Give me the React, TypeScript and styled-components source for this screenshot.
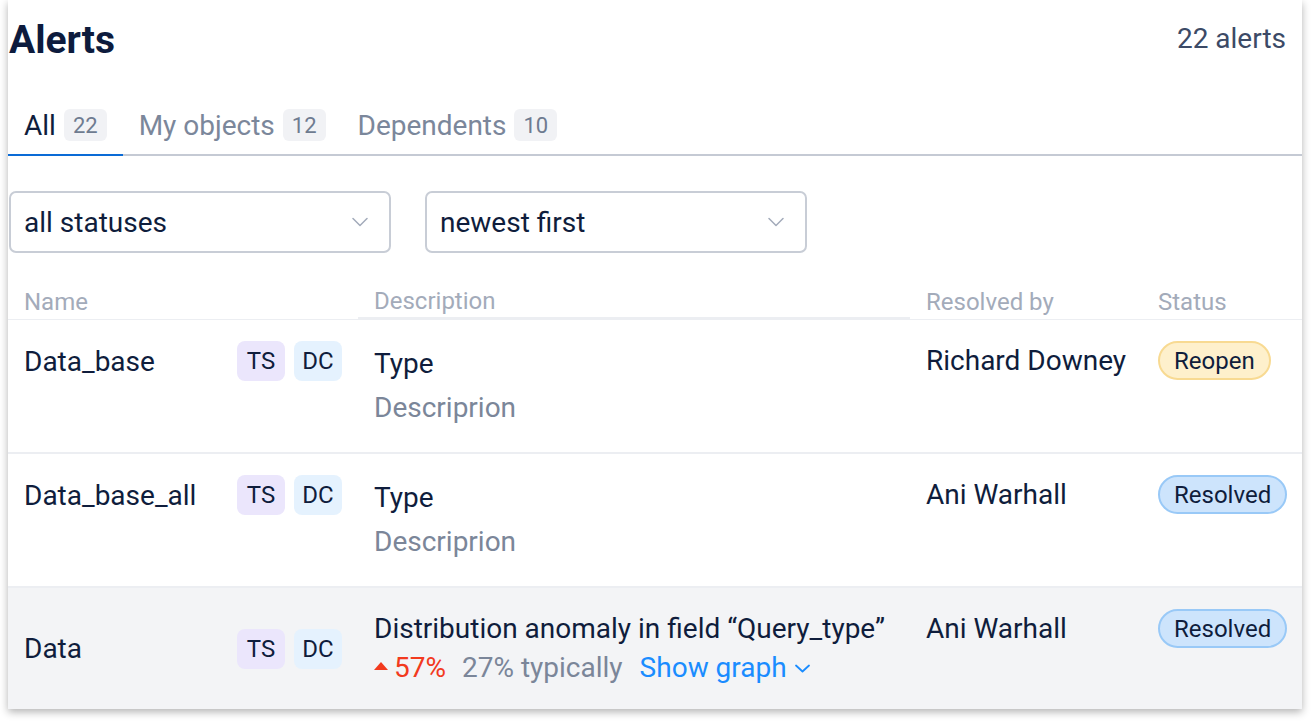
import React from "react";
import styled, { createGlobalStyle } from "styled-components";

const GlobalStyle = createGlobalStyle`
  body {
    margin: 0;
    background: #ffffff;
    font-family: Roboto, "Liberation Sans", sans-serif;
    color: #0f1d3c;
  }
  * { box-sizing: border-box; }
`;

type Status = "reopen" | "resolved";

interface AlertRow {
  name: string;
  resolvedBy: string;
  status: Status;
}

const rows: AlertRow[] = [
  { name: "Data_base", resolvedBy: "Richard Downey", status: "reopen" },
  { name: "Data_base_all", resolvedBy: "Ani Warhall", status: "resolved" },
];

const tabs = [
  { label: "All", count: 22, active: true },
  { label: "My objects", count: 12, active: false },
  { label: "Dependents", count: 10, active: false },
];

const Chevron: React.FC<{ color: string; w?: number; h?: number; stroke?: number }> = ({
  color,
  w = 16,
  h = 10,
  stroke = 1.5,
}) => (
  <svg width={w} height={h} viewBox={`0 0 ${w} ${h}`} fill="none">
    <polyline
      points={`1,1.5 ${w / 2},${h - 1.5} ${w - 1},1.5`}
      stroke={color}
      strokeWidth={stroke}
      strokeLinecap="round"
      strokeLinejoin="round"
    />
  </svg>
);

const Tags: React.FC = () => (
  <TagGroup>
    <Tag $kind="ts">TS</Tag>
    <Tag $kind="dc">DC</Tag>
  </TagGroup>
);

const App: React.FC = () => {
  return (
    <Page>
      <GlobalStyle />
      <Card>
        <Header>
          <Title>Alerts</Title>
          <Total>22 alerts</Total>
        </Header>

        <TabBar>
          {tabs.map((t) => (
            <Tab key={t.label} $active={t.active}>
              {t.label}
              <Count>{t.count}</Count>
            </Tab>
          ))}
        </TabBar>

        <Filters>
          <Select>
            all statuses
            <Chevron color="#a3abba" />
          </Select>
          <Select>
            newest first
            <Chevron color="#a3abba" />
          </Select>
        </Filters>

        <HeadRow>
          <HeadCell>Name</HeadCell>
          <HeadCell $underlined>Description</HeadCell>
          <HeadCell>Resolved by</HeadCell>
          <HeadCell>Status</HeadCell>
        </HeadRow>

        {rows.map((r) => (
          <Row key={r.name} $height={134}>
            <NameCell>
              <Name>{r.name}</Name>
              <Tags />
            </NameCell>
            <DescCell>
              <DescTitle>Type</DescTitle>
              <DescSub>Descriprion</DescSub>
            </DescCell>
            <PersonCell>{r.resolvedBy}</PersonCell>
            <StatusCell>
              <Pill $status={r.status}>{r.status === "reopen" ? "Reopen" : "Resolved"}</Pill>
            </StatusCell>
          </Row>
        ))}

        <Row $height={121} $highlight>
          <NameCell $centered>
            <Name>Data</Name>
            <Tags />
          </NameCell>
          <DescCell $compact>
            <DescTitle>Distribution anomaly in field “Query_type”</DescTitle>
            <Metrics>
              <Change>
                <svg width="14" height="8" viewBox="0 0 14 8">
                  <polygon points="0,8 7,0 14,8" fill="#f23a1e" />
                </svg>
                57%
              </Change>
              <Typical>27% typically</Typical>
              <GraphLink>
                Show graph
                <Chevron color="#1a8cff" w={15} h={9} stroke={1.8} />
              </GraphLink>
            </Metrics>
          </DescCell>
          <PersonCell>Ani Warhall</PersonCell>
          <StatusCell>
            <Pill $status="resolved">Resolved</Pill>
          </StatusCell>
        </Row>
      </Card>
    </Page>
  );
};

export default App;

const Page = styled.div`
  padding: 0 14px 16px 8px;
`;

const Card = styled.div`
  width: 1294px;
  background: #ffffff;
  box-shadow: 0 3px 8px rgba(0, 0, 0, 0.3);
`;

const Header = styled.div`
  display: flex;
  justify-content: space-between;
  align-items: flex-start;
  padding: 16px 16px 0 1px;
  height: 66px;
`;

const Title = styled.h1`
  margin: 0;
  font-size: 39px;
  line-height: 48px;
  font-weight: 700;
  color: #0d1b3d;
`;

const Total = styled.div`
  font-size: 28px;
  line-height: 46px;
  color: #3c4a66;
`;

const TabBar = styled.div`
  display: flex;
  margin-top: 30px;
  border-bottom: 2px solid #c5cad4;
`;

const Tab = styled.div<{ $active?: boolean }>`
  display: flex;
  align-items: center;
  gap: 8px;
  height: 60px;
  padding: 0 16px;
  margin-bottom: -2px;
  font-size: 28px;
  color: ${(p) => (p.$active ? "#0f1d3c" : "#7b879b")};
  border-bottom: 2px solid ${(p) => (p.$active ? "#0a6bd6" : "transparent")};
`;

const Count = styled.span`
  display: inline-flex;
  align-items: center;
  justify-content: center;
  height: 32px;
  padding: 0 9px;
  border-radius: 6px;
  background: #f1f2f5;
  color: #6e7b90;
  font-size: 22px;
`;

const Filters = styled.div`
  display: flex;
  gap: 34px;
  margin-top: 35px;
  padding-left: 1px;
`;

const Select = styled.div`
  display: flex;
  align-items: center;
  justify-content: space-between;
  width: 382px;
  height: 62px;
  padding: 0 21px 0 13px;
  border: 2px solid #c8cdd6;
  border-radius: 7px;
  font-size: 28px;
  color: #0f1d3c;
`;

const Grid = styled.div`
  display: grid;
  grid-template-columns: 350px 552px 232px 1fr;
`;

const HeadRow = styled(Grid)`
  margin-top: 27px;
  height: 40px;
  border-bottom: 1px solid #eceef2;
`;

const HeadCell = styled.div<{ $underlined?: boolean }>`
  align-self: end;
  padding: 0 16px 1px;
  font-size: 24px;
  line-height: 32px;
  color: #a3abba;
  ${(p) =>
    p.$underlined
      ? "box-shadow: inset 0 -3px 0 #eceef2; padding-bottom: 3px; margin-bottom: -1px;"
      : ""}
`;

const Row = styled(Grid)<{ $height: number; $highlight?: boolean }>`
  height: ${(p) => p.$height}px;
  background: ${(p) => (p.$highlight ? "#f3f4f6" : "#ffffff")};
  border-bottom: ${(p) => (p.$highlight ? "none" : "2px solid #eceef2")};
`;

const NameCell = styled.div<{ $centered?: boolean }>`
  display: flex;
  align-items: center;
  justify-content: space-between;
  height: 40px;
  padding: 0 16px;
  margin-top: ${(p) => (p.$centered ? "0" : "21px")};
  align-self: ${(p) => (p.$centered ? "center" : "start")};
`;

const Name = styled.span`
  font-size: 28px;
  color: #0f1d3c;
`;

const TagGroup = styled.div`
  display: flex;
  gap: 9px;
`;

const Tag = styled.span<{ $kind: "ts" | "dc" }>`
  display: inline-flex;
  align-items: center;
  justify-content: center;
  width: 48px;
  height: 40px;
  border-radius: 8px;
  font-size: 24px;
  color: #0f1d3c;
  background: ${(p) => (p.$kind === "ts" ? "#ebe6fc" : "#e5f2fe")};
`;

const DescCell = styled.div<{ $compact?: boolean }>`
  display: flex;
  flex-direction: column;
  gap: ${(p) => (p.$compact ? "3px" : "8px")};
  padding: ${(p) => (p.$compact ? "23px" : "26px")} 16px 0;
`;

const DescTitle = styled.div`
  font-size: 28px;
  line-height: 36px;
  color: #0f1d3c;
  white-space: nowrap;
`;

const DescSub = styled.div`
  font-size: 28px;
  line-height: 36px;
  color: #7b8699;
`;

const Metrics = styled.div`
  display: flex;
  align-items: center;
  font-size: 28px;
  line-height: 36px;
  white-space: nowrap;
`;

const Change = styled.span`
  display: inline-flex;
  align-items: center;
  gap: 6px;
  color: #f23a1e;

  & > svg {
    margin-bottom: 4px;
  }
`;

const Typical = styled.span`
  margin-left: 16px;
  color: #7b8699;
`;

const GraphLink = styled.span`
  display: inline-flex;
  align-items: center;
  gap: 8px;
  margin-left: 17px;
  color: #1a8cff;
`;

const PersonCell = styled.div`
  padding: 23px 16px 0;
  font-size: 28px;
  line-height: 36px;
  color: #0f1d3c;
  white-space: nowrap;
`;

const StatusCell = styled.div`
  padding: 21px 16px 0;
`;

const Pill = styled.span<{ $status: Status }>`
  display: inline-flex;
  align-items: center;
  height: 39px;
  padding: 0 14px;
  border-radius: 20px;
  font-size: 24px;
  color: #0f1d3c;
  background: ${(p) => (p.$status === "reopen" ? "#fef0cc" : "#cde4fc")};
  border: 2px solid ${(p) => (p.$status === "reopen" ? "#f8da92" : "#99c9f7")};
`;
